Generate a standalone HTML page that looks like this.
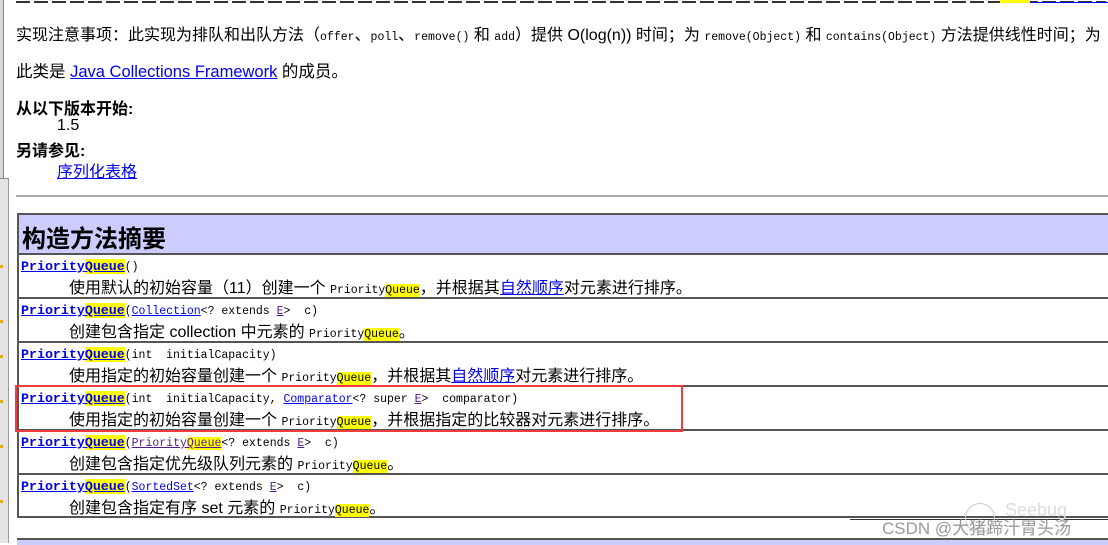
<!DOCTYPE html>
<html><head><meta charset="utf-8"><style>
body{margin:0;width:1108px;height:543px;overflow:hidden;background:#fff;position:relative;font-family:"Liberation Sans","Noto Sans CJK SC",sans-serif;color:#000}
.a{position:absolute;white-space:nowrap}
.t{font-size:16px}
.m{font-family:"Liberation Mono","Noto Sans CJK SC",monospace;font-size:11.5px}
a{color:#00e;text-decoration:underline}
.h{background:#ff0}
.row{position:absolute;left:17px;width:1100px;height:43px;border-top:2px solid #555;}
.l1{position:absolute;left:4px;top:2px}
.l2{position:absolute;left:52px;top:19px;font-size:16px}
b.k{font-family:"Liberation Mono",monospace;font-size:13.3px;color:#00e;text-decoration:underline}
.pur{color:#551a8b;text-decoration:underline}
</style></head><body>
<div class="a" style="left:0;top:0;width:3px;height:543px;background:#d8d8d8"></div>
<div class="a" style="left:3px;top:0;width:1px;height:543px;background:#888"></div>
<div class="a" style="left:0;top:178px;width:8px;height:365px;background:#e4e4e4;border-right:1px solid #999"></div>
<div class="a" style="left:0;top:178px;width:9px;height:1px;background:#888"></div>
<div class="a" style="left:0;top:265px;width:3px;height:3px;background:#e0b000"></div>
<div class="a" style="left:0;top:320px;width:3px;height:3px;background:#e0b000"></div>
<div class="a" style="left:0;top:355px;width:3px;height:3px;background:#e0b000"></div>
<div class="a" style="left:0;top:400px;width:3px;height:3px;background:#e0b000"></div>
<div class="a" style="left:0;top:445px;width:3px;height:3px;background:#e0b000"></div>
<div class="a" style="left:0;top:500px;width:3px;height:3px;background:#e0b000"></div>

<div class="a" style="left:16px;top:0;width:1090px;height:4px;overflow:hidden"><div style="height:2px;margin-top:1px;background:repeating-linear-gradient(90deg,#333 0 14px,#fff 14px 18px)"></div></div>
<div class="a" style="left:1000px;top:0;width:30px;height:3px;background:#ff0"></div>
<div class="a" style="left:1030px;top:2px;width:78px;height:1px;background:#00e"></div>

<div class="a t" style="left:16px;top:21px">实现注意事项：此实现为排队和出队方法（<span class="m">offer</span>、<span class="m">poll</span>、<span class="m">remove()</span> 和 <span class="m">add</span>）提供 O(log(n)) 时间；为 <span class="m">remove(Object)</span> 和 <span class="m">contains(Object)</span> 方法提供线性时间；为</div>
<div class="a t" style="left:16px;top:58px;font-size:16.5px">此类是 <a>Java Collections Framework</a> 的成员。</div>
<div class="a t" style="left:16px;top:95px;font-weight:bold">从以下版本开始:</div>
<div class="a t" style="left:57px;top:117px">1.5</div>
<div class="a t" style="left:16px;top:137px;font-weight:bold">另请参见:</div>
<div class="a t" style="left:57px;top:158px"><a>序列化表格</a></div>
<div class="a" style="left:16px;top:195px;width:1092px;height:2px;background:#aaa"></div>

<div class="a" style="left:17px;top:213px;width:1100px;height:305px;border:2px solid #555;box-sizing:border-box"></div>
<div class="a" style="left:19px;top:215px;width:1089px;height:38px;background:#ccf"></div>
<div class="a" style="left:22px;top:219px;font-size:24px;font-weight:bold">构造方法摘要</div>

<div class="row" style="top:253px"><div class="l1"><b class="k">Priority<span class="h">Queue</span></b><span class="m">()</span></div><div class="l2">使用默认的初始容量（11）创建一个 <span class="m">Priority<span class="h">Queue</span></span>，并根据其<a>自然顺序</a>对元素进行排序。</div></div>
<div class="row" style="top:297px"><div class="l1"><b class="k">Priority<span class="h">Queue</span></b><span class="m">(<a>Collection</a>&lt;? extends <span class="pur">E</span>&gt;&nbsp;&nbsp;c)</span></div><div class="l2">创建包含指定 collection 中元素的 <span class="m">Priority<span class="h">Queue</span></span>。</div></div>
<div class="row" style="top:341px"><div class="l1"><b class="k">Priority<span class="h">Queue</span></b><span class="m">(int&nbsp;&nbsp;initialCapacity)</span></div><div class="l2">使用指定的初始容量创建一个 <span class="m">Priority<span class="h">Queue</span></span>，并根据其<a>自然顺序</a>对元素进行排序。</div></div>
<div class="row" style="top:385px"><div class="l1"><b class="k">Priority<span class="h">Queue</span></b><span class="m">(int&nbsp;&nbsp;initialCapacity, <a>Comparator</a>&lt;? super <span class="pur">E</span>&gt;&nbsp;&nbsp;comparator)</span></div><div class="l2">使用指定的初始容量创建一个 <span class="m">Priority<span class="h">Queue</span></span>，并根据指定的比较器对元素进行排序。</div></div>
<div class="row" style="top:429px"><div class="l1"><b class="k">Priority<span class="h">Queue</span></b><span class="m">(<span class="pur">Priority<span class="h">Queue</span></span>&lt;? extends <span class="pur">E</span>&gt;&nbsp;&nbsp;c)</span></div><div class="l2">创建包含指定优先级队列元素的 <span class="m">Priority<span class="h">Queue</span></span>。</div></div>
<div class="row" style="top:473px;height:43px"><div class="l1"><b class="k">Priority<span class="h">Queue</span></b><span class="m">(<a>SortedSet</a>&lt;? extends <span class="pur">E</span>&gt;&nbsp;&nbsp;c)</span></div><div class="l2">创建包含指定有序 set 元素的 <span class="m">Priority<span class="h">Queue</span></span>。</div></div>

<div class="a" style="left:15px;top:385px;width:664px;height:43px;border:2px solid #f03c3c"></div>

<div class="a" style="left:17px;top:538px;width:1091px;height:5px;border-top:2px solid #555;background:#ccf"></div>
<div class="a" style="left:850px;top:519px;width:258px;height:1px;background:#333"></div>
<div class="a" style="left:965px;top:503px;width:28px;height:28px;border:1px solid #ccc;border-radius:50%"></div>
<div class="a" style="left:1005px;top:500px;font-size:18px;color:#ddd">Seebug</div>
<div class="a" style="left:882px;top:514px;font-size:17px;color:#999">CSDN @大猪蹄汁胃头汤</div>
</body></html>
